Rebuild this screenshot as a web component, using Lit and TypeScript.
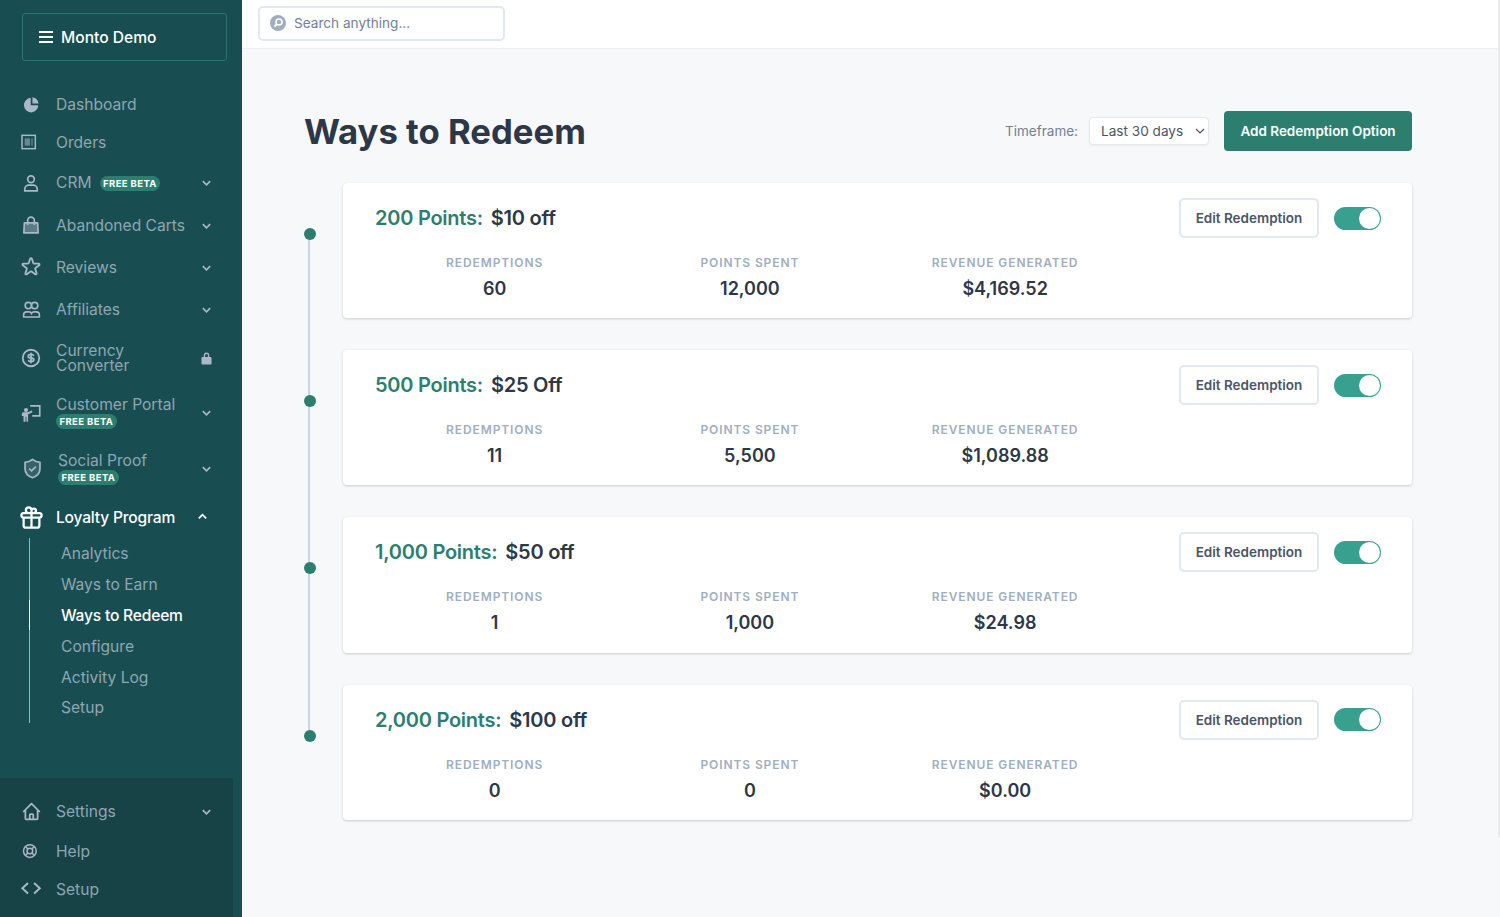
import { LitElement, html, css, svg } from 'lit';
import { customElement } from 'lit/decorators.js';

const outline = (d: string) => svg`<path d=${d} fill="none" stroke="currentColor" stroke-width="2" stroke-linecap="round" stroke-linejoin="round"/>`;

const ICONS: Record<string, unknown> = {
  pie: svg`<path fill="currentColor" d="M2.500 13A9.500 9.500 0 0 1 11 3.500V13h9.500A9 9 0 1 1 2.500 13z"/><path fill="currentColor" d="M13.200 2.700a9 9 0 0 1 7.600 8H13.200z"/>`,
  orders: svg`<rect x="-1.500" y="2" width="20" height="20" fill="none" stroke="currentColor" stroke-width="2.200"/><rect x="2.500" y="6.500" width="8" height="11" fill="currentColor" opacity=".55"/><rect x="12" y="6.500" width="3" height="11" fill="currentColor" opacity=".35"/>`,
  user: svg`<circle cx="12" cy="7.500" r="4" fill="none" stroke="currentColor" stroke-width="2"/><path d="M4.500 21.500v-2a5 5 0 0 1 5-5h5a5 5 0 0 1 5 5v2z" fill="none" stroke="currentColor" stroke-width="2" stroke-linejoin="round"/>`,
  bag: svg`<path d="M4 9.500h16l.6 12H3.400z" fill="currentColor" fill-opacity=".45" stroke="currentColor" stroke-width="2" stroke-linejoin="round"/><path d="M8 12V6.500a4 4 0 0 1 8 0V12" fill="none" stroke="currentColor" stroke-width="2"/>`,
  star: outline('M11.049 2.927c.3-.921 1.603-.921 1.902 0l1.519 4.674a1 1 0 00.95.69h4.915c.969 0 1.371 1.24.588 1.81l-3.976 2.888a1 1 0 00-.364 1.118l1.518 4.674c.3.922-.755 1.688-1.538 1.118l-3.976-2.888a1 1 0 00-1.176 0l-3.976 2.888c-.783.57-1.838-.197-1.538-1.118l1.518-4.674a1 1 0 00-.363-1.118l-3.975-2.888c-.784-.57-.38-1.81.588-1.81h4.914a1 1 0 00.951-.69l1.519-4.674z'),
  team: svg`<circle cx="8" cy="7" r="4" fill="none" stroke="currentColor" stroke-width="2"/><circle cx="16" cy="7" r="4" fill="none" stroke="currentColor" stroke-width="2"/><path d="M2 21.500v-2.500a4 4 0 0 1 4-4h3a3 3 0 0 1 3 2.500 3 3 0 0 1 3-2.500h3a4 4 0 0 1 4 4v2.500z" fill="none" stroke="currentColor" stroke-width="2" stroke-linejoin="round"/>`,
  dollar: outline('M12 8c-1.657 0-3 .895-3 2s1.343 2 3 2 3 .895 3 2-1.343 2-3 2m0-8c1.11 0 2.08.402 2.599 1M12 8V7m0 1v8m0 0v1m0-1c-1.11 0-2.08-.402-2.599-1M21 12a9 9 0 11-18 0 9 9 0 0118 0z'),
  presenter: svg`<circle cx="6" cy="8.500" r="2.500" fill="currentColor"/><path fill="currentColor" d="M1 13a2 2 0 0 1 2-2h5l5-2 .8 2-5.300 2.500V22.500H6.500v-6h-1v6H3V15.500H1z"/><path d="M11 3.500h11.500v12H13.500" fill="none" stroke="currentColor" stroke-width="2"/>`,
  shield: svg`<path d="M12 2.500c2.200 2 5 3 7.800 3V12c0 4.600-3.200 8-7.800 9.600C7.400 20 4.200 16.600 4.200 12V5.500c2.800 0 5.600-1 7.800-3z" fill="currentColor" fill-opacity=".2" stroke="currentColor" stroke-width="1.800" stroke-linejoin="round"/><path d="M8.500 12l2.500 2.500 4.500-4.500" fill="none" stroke="currentColor" stroke-width="1.800"/>`,
  gift: outline('M12 8v13m0-13V6a2 2 0 112 2h-2zm0 0V5.500A2.500 2.500 0 109.500 8H12zm-7 4h14M5 12a2 2 0 110-4h14a2 2 0 110 4M5 12v7a2 2 0 002 2h10a2 2 0 002-2v-7'),
  home: outline('M3 12l2-2m0 0l7-7 7 7M5 10v10a1 1 0 001 1h3m10-11l2 2m-2-2v10a1 1 0 01-1 1h-3m-6 0a1 1 0 001-1v-4a1 1 0 011-1h2a1 1 0 011 1v4a1 1 0 001 1m-6 0h6'),
  help: svg`<circle cx="10.500" cy="12" r="8.500" fill="none" stroke="currentColor" stroke-width="2"/><circle cx="10.500" cy="12" r="3.800" fill="none" stroke="currentColor" stroke-width="2"/><path d="M4.500 6l3.300 3.300M16.500 6l-3.300 3.300M4.500 18l3.300-3.300M16.500 18l-3.300-3.300" stroke="currentColor" stroke-width="2"/>`,
  code: svg`<path d="M8 4.500L1.500 10.500 8 16.500M15 4.500l6.500 6-6.500 6" fill="none" stroke="currentColor" stroke-width="2.200"/>`,
};

interface NavItem {
  label: string;
  icon: string;
  h: number;
  badge?: 'inline' | 'below';
  end?: 'down' | 'up' | 'lock';
  active?: boolean;
  wrap?: boolean;
  nudge?: boolean;
  size?: number;
}

const MAIN_NAV: NavItem[] = [
  { label: 'Dashboard', icon: 'pie', h: 38, size: 19 },
  { label: 'Orders', icon: 'orders', h: 38, size: 16 },
  { label: 'CRM', icon: 'user', h: 43, badge: 'inline', end: 'down', size: 20 },
  { label: 'Abandoned Carts', icon: 'bag', h: 42, end: 'down', size: 20 },
  { label: 'Reviews', icon: 'star', h: 42, end: 'down', size: 22 },
  { label: 'Affiliates', icon: 'team', h: 42, end: 'down', size: 19 },
  { label: 'Currency Converter', icon: 'dollar', h: 56, end: 'lock', wrap: true, size: 22 },
  { label: 'Customer Portal', icon: 'presenter', h: 53, badge: 'below', end: 'down', size: 20 },
  { label: 'Social Proof', icon: 'shield', h: 59, badge: 'below', end: 'down', nudge: true, size: 23 },
  { label: 'Loyalty Program', icon: 'gift', h: 38, end: 'up', active: true, size: 27 },
];

const SUB_NAV = ['Analytics', 'Ways to Earn', 'Ways to Redeem', 'Configure', 'Activity Log', 'Setup'];

const FOOT_NAV: NavItem[] = [
  { label: 'Settings', icon: 'home', h: 40, end: 'down', size: 21 },
  { label: 'Help', icon: 'help', h: 40, size: 18 },
  { label: 'Setup', icon: 'code', h: 36, size: 21 },
];

const REDEMPTIONS = [
  { points: '200 Points:', reward: '$10 off', count: '60', spent: '12,000', revenue: '$4,169.52' },
  { points: '500 Points:', reward: '$25 Off', count: '11', spent: '5,500', revenue: '$1,089.88' },
  { points: '1,000 Points:', reward: '$50 off', count: '1', spent: '1,000', revenue: '$24.98' },
  { points: '2,000 Points:', reward: '$100 off', count: '0', spent: '0', revenue: '$0.00' },
];

@customElement('app-root')
export class AppRoot extends LitElement {
  static styles = css`
    :host {
      display: flex;
      position: relative;
      width: 1500px;
      height: 917px;
      overflow: hidden;
      font-family: Inter, 'Liberation Sans', sans-serif;
      background: #f7f8f9;
      color: #2d3748;
    }
    .sidebar {
      width: 242px;
      flex: none;
      display: flex;
      flex-direction: column;
      background: #184e52;
      color: #8fa6b1;
      font-size: 15.600px;
    }
    .account {
      margin: 13px 15px 0 22px;
      height: 48px;
      box-sizing: border-box;
      display: flex;
      align-items: center;
      gap: 8px;
      padding-left: 16px;
      border: 1px solid #2a7670;
      border-radius: 3px;
      color: #fff;
      font-weight: 500;
    }
    .burger { width: 14px; height: 12px; flex: none; color: #fff; }
    .nav { margin-top: 24px; }
    .item {
      display: flex;
      align-items: center;
      padding: 0 30px 0 20px;
      box-sizing: border-box;
    }
    .item.nudge { padding-left: 21px; }
    .item.active { color: #fff; font-weight: 500; letter-spacing: -0.2px; }
    .slot {
      width: 22px;
      height: 24px;
      flex: none;
      margin-right: 14px;
      display: flex;
      align-items: center;
      justify-content: center;
      color: #aab8c8;
    }
    .nudge .slot { margin-right: 15px; }
    .active .slot { color: #fff; }
    .slot svg { display: block; flex: none; overflow: visible; }
    .label { line-height: 16px; margin-top: 1px; }
    .label.wrap { width: 100px; line-height: 15.500px; margin-top: 0; }
    .stack { display: flex; flex-direction: column; align-items: flex-start; gap: 1px; }
    .badge {
      font-size: 9.500px;
      line-height: 15px;
      font-weight: 700;
      letter-spacing: 0.4px;
      color: #fff;
      background: #2c7f6f;
      border-radius: 8px;
      padding: 0 3.500px;
      white-space: nowrap;
    }
    .badge.inline { margin: 1px 0 0 8px; }
    .end { margin-left: auto; width: 11px; height: 11px; flex: none; color: #aab8c8; display: block; }
    .active .end { color: #fff; transform: translate(-4px, -1px); }
    .sub {
      list-style: none;
      margin: 2px 0 0 29px;
      padding: 0;
      border-left: 1px solid #9fb2bb;
    }
    .sub li {
      height: 30.800px;
      box-sizing: border-box;
      display: flex;
      align-items: center;
      padding: 1px 0 0 31px;
      margin-left: -1px;
      border-left: 1px solid transparent;
    }
    .sub li.current { color: #fff; font-weight: 500; letter-spacing: -0.2px; border-left-color: #fff; }
    .foot {
      margin: auto 9px 0 0;
      padding: 13px 0 10px;
      background: #174347;
    }
    .foot .item { padding-right: 21px; }
    .content { flex: 1; min-width: 0; display: flex; flex-direction: column; }
    .topbar {
      height: 49px;
      box-sizing: border-box;
      flex: none;
      padding: 6px 0 0 16px;
      background: #fff;
      border-bottom: 1px solid #edf0f3;
    }
    .search {
      width: 247px;
      height: 34.500px;
      box-sizing: border-box;
      display: flex;
      align-items: center;
      gap: 8px;
      padding-left: 10px;
      border: 2px solid #e2e8f0;
      border-radius: 5px;
      color: #718096;
      font-size: 13.600px;
    }
    .search svg { flex: none; }
    .page { padding: 62px 88px 0 63px; }
    .head { display: flex; align-items: center; height: 40px; }
    h1 { margin: 0 0 0 -1px; font-size: 34.700px; line-height: 40px; font-weight: 700; color: #2d3748; }
    .timeframe { margin-left: auto; font-size: 13.500px; color: #718096; }
    .picker { position: relative; margin: 0 15px 0 11px; display: flex; }
    select {
      appearance: none;
      width: 120px;
      height: 28px;
      padding: 0 0 0 11px;
      background: #fff;
      border: 1px solid #e2e8f0;
      border-radius: 4px;
      box-shadow: 0 1px 2px rgba(45, 55, 72, 0.06);
      font: 13.600px Inter, 'Liberation Sans', sans-serif;
      color: #4a5568;
    }
    .picker svg { position: absolute; right: 4px; top: 11px; pointer-events: none; }
    .primary {
      width: 188px;
      height: 40px;
      padding: 0;
      border: 0;
      border-radius: 4px;
      background: #2c7f6f;
      color: #fff;
      font: 600 13.500px Inter, 'Liberation Sans', sans-serif;
    }
    .list {
      position: relative;
      display: flex;
      flex-direction: column;
      gap: 32px;
      margin-top: 32px;
    }
    .list::before {
      content: '';
      position: absolute;
      left: 3px;
      top: 51px;
      bottom: 84px;
      width: 2px;
      background: #cbd5e0;
    }
    .row { display: flex; height: 135.200px; }
    .dot {
      position: relative;
      width: 12px;
      height: 12px;
      flex: none;
      margin: 45px 26px 0 -1px;
      border-radius: 50%;
      background: #2c7f6f;
    }
    .card {
      flex: 1;
      margin-left: 1px;
      box-sizing: border-box;
      padding: 15px 31px 0 32px;
      background: #fff;
      border-radius: 4px;
      box-shadow: 0 1px 3px rgba(45, 55, 72, 0.16), 0 1px 2px rgba(45, 55, 72, 0.08);
    }
    .card-top { display: flex; align-items: center; height: 40px; }
    .title { font-size: 20px; font-weight: 600; color: #2d3748; display: flex; gap: 8px; letter-spacing: -0.25px; }
    .points { color: #2c7f6f; }
    .edit {
      margin-left: auto;
      width: 140px;
      height: 40px;
      padding: 0;
      box-sizing: border-box;
      background: #fff;
      border: 2px solid #e2e8f0;
      border-radius: 5px;
      color: #4a5568;
      font: 600 13.500px Inter, 'Liberation Sans', sans-serif;
    }
    .toggle {
      position: relative;
      width: 47px;
      height: 23px;
      margin-left: 15px;
      border-radius: 12px;
      background: #38a08f;
    }
    .toggle::after {
      content: '';
      position: absolute;
      right: 1px;
      top: 1px;
      width: 21px;
      height: 21px;
      border-radius: 50%;
      background: #fff;
    }
    .stats {
      display: grid;
      grid-template-columns: repeat(3, 255.250px);
      margin: 17px 0 0 -8px;
      text-align: center;
    }
    .stat-label {
      font-size: 12px;
      line-height: 16px;
      font-weight: 600;
      letter-spacing: 0.9px;
      color: #a0aec0;
    }
    .stat-value {
      margin-top: 4px;
      font-size: 18px;
      line-height: 28px;
      font-weight: 600;
      color: #2d3748;
    }
    .edge {
      position: absolute;
      right: 0;
      top: 0;
      width: 2px;
      height: 838px;
      background: #ececec;
    }
  `;

  private _end(kind?: string) {
    if (kind === 'lock') {
      return html`<svg class="end" viewBox="0 0 12 14" style="height:14px;width:11px"><path fill="currentColor" d="M1.500 6H3V4a3 3 0 0 1 6 0v2h1.500a1 1 0 0 1 1 1v6a1 1 0 0 1-1 1h-9a1 1 0 0 1-1-1V7a1 1 0 0 1 1-1zM4.500 6h3V4a1.500 1.500 0 0 0-3 0z"/></svg>`;
    }
    if (kind === 'up') {
      return html`<svg class="end" viewBox="0 0 12 12"><path d="M2 8l4-4 4 4" fill="none" stroke="currentColor" stroke-width="1.800"/></svg>`;
    }
    if (kind === 'down') {
      return html`<svg class="end" viewBox="0 0 12 12"><path d="M2 4.500l4 4 4-4" fill="none" stroke="currentColor" stroke-width="1.800"/></svg>`;
    }
    return '';
  }

  private _item(it: NavItem) {
    const size = it.size ?? 20;
    const label = html`<span class="label ${it.wrap ? 'wrap' : ''}">${it.label}</span>`;
    return html`
      <div class="item ${it.active ? 'active' : ''} ${it.nudge ? 'nudge' : ''}" style="height:${it.h}px">
        <span class="slot"><svg width=${size} height=${size} viewBox="0 0 24 24">${ICONS[it.icon]}</svg></span>
        ${it.badge === 'below'
          ? html`<div class="stack">${label}<span class="badge">FREE BETA</span></div>`
          : label}
        ${it.badge === 'inline' ? html`<span class="badge inline">FREE BETA</span>` : ''}
        ${this._end(it.end)}
      </div>
    `;
  }

  private _card(r: (typeof REDEMPTIONS)[number]) {
    return html`
      <div class="row">
        <span class="dot"></span>
        <div class="card">
          <div class="card-top">
            <div class="title"><span class="points">${r.points}</span><span>${r.reward}</span></div>
            <button class="edit">Edit Redemption</button>
            <div class="toggle"></div>
          </div>
          <div class="stats">
            <div><div class="stat-label">REDEMPTIONS</div><div class="stat-value">${r.count}</div></div>
            <div><div class="stat-label">POINTS SPENT</div><div class="stat-value">${r.spent}</div></div>
            <div><div class="stat-label">REVENUE GENERATED</div><div class="stat-value">${r.revenue}</div></div>
          </div>
        </div>
      </div>
    `;
  }

  render() {
    return html`
      <aside class="sidebar">
        <div class="account">
          <svg class="burger" viewBox="0 0 14 12"><path d="M0 1h14M0 6h14M0 11h14" stroke="currentColor" stroke-width="2"/></svg>
          Monto Demo
        </div>
        <nav class="nav">
          ${MAIN_NAV.map((it) => this._item(it))}
          <ul class="sub">
            ${SUB_NAV.map((s) => html`<li class=${s === 'Ways to Redeem' ? 'current' : ''}>${s}</li>`)}
          </ul>
        </nav>
        <div class="foot">${FOOT_NAV.map((it) => this._item(it))}</div>
      </aside>
      <div class="content">
        <div class="topbar">
          <div class="search">
            <svg width="16" height="16" viewBox="0 0 16 16">
              <circle cx="8" cy="8" r="8" fill="#a0aec0"/>
              <circle cx="9" cy="7" r="3" fill="none" stroke="#fff" stroke-width="1.600"/>
              <path d="M6.800 9.200L4.500 11.500" stroke="#fff" stroke-width="1.800"/>
            </svg>
            <span>Search anything...</span>
          </div>
        </div>
        <main class="page">
          <div class="head">
            <h1>Ways to Redeem</h1>
            <span class="timeframe">Timeframe:</span>
            <div class="picker">
              <select><option>Last 30 days</option></select>
              <svg width="10" height="6" viewBox="0 0 10 6"><path d="M1 1l4 4 4-4" fill="none" stroke="#4a5568" stroke-width="1.200"/></svg>
            </div>
            <button class="primary">Add Redemption Option</button>
          </div>
          <div class="list">${REDEMPTIONS.map((r) => this._card(r))}</div>
        </main>
      </div>
      <div class="edge"></div>
    `;
  }
}
